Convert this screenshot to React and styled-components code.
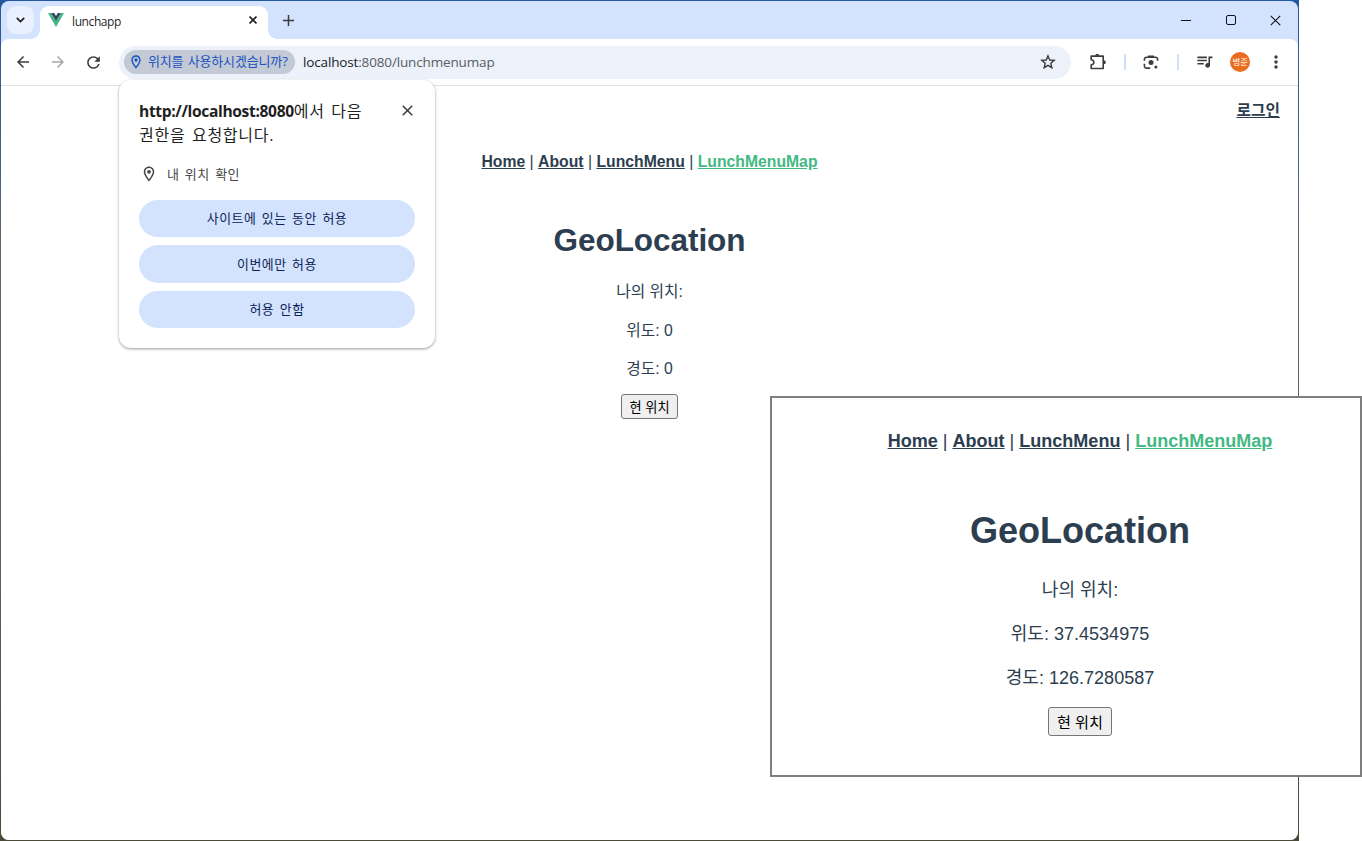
import React, { useState } from "react";
import styled, { createGlobalStyle } from "styled-components";
import {
    MdArrowBack,
    MdArrowForward,
    MdMoreVert,
    MdOutlineLocationOn,
    MdQueueMusic,
    MdRefresh,
} from "react-icons/md";

const GlobalStyle = createGlobalStyle`
    * {
        box-sizing: border-box;
    }

    body {
        margin: 0;
        background: #fff;
        overflow: hidden;
    }
`;

const uiFont = `"Open Sans", "Noto Sans CJK KR", sans-serif`;
const pageFont = `"Liberation Sans", "Noto Sans CJK KR", sans-serif`;

const Screen = styled.div`
    position: relative;
    width: 1362px;
    height: 841px;
`;

const Desktop = styled.div`
    display: flex;
    width: 1299px;
    height: 841px;
    padding: 1px;
    background: linear-gradient(#2458a0, #5b6670 30%, #5d6058 70%, #4a4a38);
`;

const Browser = styled.div`
    display: flex;
    flex-direction: column;
    flex: 1;
    background: #d3e2fd;
    border-radius: 8px;
    overflow: hidden;
    font-family: ${uiFont};
`;

const TabStrip = styled.div`
    display: flex;
    align-items: flex-start;
    height: 38px;
    padding-left: 6px;
    color: #1f1f1f;
`;

const TabSearch = styled.button`
    display: flex;
    align-items: center;
    justify-content: center;
    width: 27px;
    height: 28px;
    margin-top: 5px;
    padding: 0;
    border: none;
    border-radius: 9px;
    background: #e9f1fe;
`;

const Tab = styled.div`
    position: relative;
    display: flex;
    align-items: center;
    width: 228px;
    height: 33px;
    margin: 5px 0 0 6px;
    padding: 0 11px 5px 8px;
    border-radius: 9px 9px 0 0;
    background: #fff;

    &::before,
    &::after {
        content: "";
        position: absolute;
        bottom: 0;
        width: 9px;
        height: 9px;
    }

    &::before {
        left: -9px;
        background: radial-gradient(circle at 0 0, transparent 8.5px, #fff 9px);
    }

    &::after {
        right: -9px;
        background: radial-gradient(circle at 100% 0, transparent 8.5px, #fff 9px);
    }
`;

const TabTitle = styled.span`
    flex: 1;
    margin: 4px 0 0 8px;
    font-size: 12px;
    letter-spacing: -0.4px;
    line-height: 16px;
`;

const IconButton = styled.button`
    display: flex;
    align-items: center;
    justify-content: center;
    width: ${(props) => props.$width || 20}px;
    height: ${(props) => props.$height || 20}px;
    padding: 0;
    border: none;
    background: none;
    color: ${(props) => props.$color || "#3c3c3c"};
`;

const NewTab = styled(IconButton)`
    margin: 9px 0 0 10px;
`;

const WindowButtons = styled.div`
    display: flex;
    margin-left: auto;
`;

const Toolbar = styled.div`
    display: flex;
    align-items: center;
    height: 47px;
    padding: 0 12px 0 12px;
    background: #fff;
    border-bottom: 1px solid #dfe1e4;
    border-radius: 8px 8px 0 0;
`;

const NavButtons = styled.div`
    display: flex;
    gap: 15px;
    margin-right: 16px;
`;

const AddressBar = styled.div`
    display: flex;
    align-items: center;
    width: 952px;
    height: 33px;
    padding: 0 13px 0 5px;
    border-radius: 17px;
    background: #ecf1fa;
`;

const PermissionChip = styled.div`
    display: flex;
    align-items: center;
    width: 171px;
    height: 24px;
    padding-left: 4px;
    gap: 4px;
    border-radius: 12px;
    background: #c3c9d5;
    color: #1c54c0;
    font-size: 13px;
    line-height: 20px;
    white-space: nowrap;
`;

const ChipText = styled.span`
    margin-bottom: 2px;
    letter-spacing: -0.15px;
    word-spacing: 1px;
`;

const Url = styled.div`
    flex: 1;
    margin-left: 8px;
    color: #5a5d62;
    font-size: 13.5px;
    letter-spacing: -0.15px;
`;

const Host = styled.span`
    color: #202124;
`;

const Actions = styled.div`
    display: flex;
    align-items: center;
    justify-content: space-between;
    flex: 1;
    margin-left: 17px;
`;

const Divider = styled.span`
    width: 2px;
    height: 16px;
    background: #d0e0fc;
`;

const Avatar = styled.div`
    width: 20px;
    height: 20px;
    border-radius: 50%;
    background: #ea6d20;
    color: #fff;
    font-size: 8.5px;
    line-height: 19px;
    text-align: center;
`;

const Page = styled.div`
    flex: 1;
    background: #fff;
    color: #2c3e50;
    font-family: ${pageFont};
`;

const LoginRow = styled.div`
    display: flex;
    justify-content: flex-end;
    height: 48px;
    padding: 13px 18px 0 0;
    font-size: 15.8px;
    line-height: 24px;
`;

const Link = styled.a`
    color: ${(props) => (props.$active ? "#42b983" : "#2c3e50")};
    font-weight: bold;
    text-decoration: underline;
`;

const GeoSection = styled.section`
    display: flex;
    flex-direction: column;
    align-items: center;
    color: #2c3e50;
    font-family: ${pageFont};
    font-size: ${(props) => props.$size}px;
    padding-top: ${(props) => props.$top}px;
`;

const NavLine = styled.nav`
    line-height: 1.2em;
    white-space: nowrap;
`;

const Title = styled.h1`
    margin: 1.59em 0 0.7em;
    font-size: 2em;
    letter-spacing: -0.05px;
    line-height: 1.15em;
`;

const Line = styled.p`
    margin: 0 0 0.95em;
    line-height: 1.5em;
`;

const PositionButton = styled.button`
    width: 3.56em;
    height: 1.62em;
    margin-top: -0.13em;
    padding: 0;
    border: 1px solid #767676;
    border-radius: 3px;
    background: #efefef;
    color: #000;
    font-family: inherit;
    font-size: 1em;
    line-height: 1;
`;

const ButtonLabel = styled.span`
    font-size: 0.84em;
`;

const Popup = styled.div`
    position: absolute;
    left: 119px;
    top: 80px;
    width: 316px;
    height: 268px;
    padding: 19px 20px;
    border-radius: 12px;
    background: #fff;
    box-shadow: 0 1px 3px rgba(0, 0, 0, 0.4);
    color: #1f1f1f;
    font-family: ${uiFont};
`;

const PopupHeader = styled.div`
    display: flex;
    align-items: flex-start;
    justify-content: space-between;
`;

const PopupTitle = styled.div`
    font-size: 16px;
    letter-spacing: 0.75px;
    line-height: 24px;
    white-space: nowrap;
    word-spacing: 1.6px;
`;

const Origin = styled.b`
    font-size: 15.6px;
    font-weight: 700;
    letter-spacing: -0.35px;
`;

const Permission = styled.div`
    display: flex;
    align-items: center;
    gap: 9px;
    height: 24px;
    margin: 15px 0 14px;
    padding-left: 1px;
    color: #474747;
    font-size: 13px;
    letter-spacing: 0.5px;
    word-spacing: 1.5px;
`;

const PermissionText = styled.span`
    margin-bottom: 2px;
`;

const Choices = styled.div`
    display: flex;
    flex-direction: column;
    gap: 8px;
`;

const Choice = styled.button`
    height: 37.4px;
    padding: 0 0 2px;
    border: none;
    border-radius: 19px;
    background: #d3e2fd;
    color: #0b2456;
    font-family: inherit;
    font-size: 12.9px;
    letter-spacing: 0.6px;
    word-spacing: 1.4px;
`;

const ResultPanel = styled.div`
    position: absolute;
    left: 770px;
    top: 396px;
    width: 592px;
    height: 381px;
    padding-left: 28px;
    border: 2px solid #7f7f7f;
    background: #fff;
`;

const VueLogo = () => (
    <svg width="16" height="14" viewBox="0 0 16 14">
        <path d="M0 0h3.2L8 8.3 12.8 0H16L8 13.9z" fill="#41b883" />
        <path d="M3.2 0h3L8 3.1 9.8 0h3L8 8.3z" fill="#34495e" />
    </svg>
);

const CloseIcon = ({ size, stroke = 1.4 }) => (
    <svg width={size} height={size} viewBox="0 0 10 10" fill="none" stroke="currentColor" strokeWidth={stroke}>
        <path d="M.7.7l8.6 8.6M9.3.7L.7 9.3" />
    </svg>
);

const StarIcon = () => (
    <svg width="16" height="16" viewBox="0 0 16 16" fill="none" stroke="currentColor" strokeWidth="1.4">
        <path d="M8 1.9l1.75 4.1 4.45.4-3.37 2.93 1 4.35L8 11.35l-3.83 2.33 1-4.35L1.8 6.4l4.45-.4z" />
    </svg>
);

const ExtensionIcon = () => (
    <svg width="18" height="18" viewBox="0 0 18 18">
        <path
            d="M2.2 3.1h12v12.4h-12v-3.6c3.6-.4 3.6-4.7 0-5.1z"
            fill="none"
            stroke="currentColor"
            strokeWidth="1.6"
            strokeLinejoin="round"
        />
        <path d="M6.2 2.8a2 2 0 0 1 4 0zM14.8 7.2a2 2 0 0 1 0 4z" fill="currentColor" />
    </svg>
);

const LensIcon = () => (
    <svg width="16" height="16" viewBox="0 0 16 16" fill="none" stroke="currentColor" strokeWidth="1.6">
        <path d="M1.4 6.8V5.4a2.2 2.2 0 0 1 2.2-2.2h8.8a2.2 2.2 0 0 1 2.2 2.2v1.4" />
        <path d="M5 2.2h6" />
        <path d="M1.4 9.7v2.2a2.2 2.2 0 0 0 2.2 2.2h3.6" />
        <circle cx="8" cy="8.6" r="2.5" fill="currentColor" stroke="none" />
        <circle cx="12.9" cy="12.9" r="1.5" fill="currentColor" stroke="none" />
    </svg>
);

const GeoLocation = ({ size, top, latitude, longitude }) => (
    <GeoSection $size={size} $top={top}>
        <NavLine>
            <Link>Home</Link> | <Link>About</Link> | <Link>LunchMenu</Link> |{" "}
            <Link $active>LunchMenuMap</Link>
        </NavLine>
        <Title>GeoLocation</Title>
        <Line>나의 위치:</Line>
        <Line>위도: {latitude}</Line>
        <Line>경도: {longitude}</Line>
        <PositionButton>
            <ButtonLabel>현 위치</ButtonLabel>
        </PositionButton>
    </GeoSection>
);

const choices = ["사이트에 있는 동안 허용", "이번에만 허용", "허용 안함"];

const App = () => {
    const [showPopup, setShowPopup] = useState(true);

    return (
        <Screen>
            <GlobalStyle />
            <Desktop>
                <Browser>
                    <TabStrip>
                        <TabSearch>
                            <svg width="9" height="6" viewBox="0 0 9 6" fill="none" stroke="#1f1f1f" strokeWidth="1.8">
                                <path d="M.8.9l3.7 3.7L8.2.9" />
                            </svg>
                        </TabSearch>
                        <Tab>
                            <VueLogo />
                            <TabTitle>lunchapp</TabTitle>
                            <CloseIcon size={8} stroke={2} />
                        </Tab>
                        <NewTab>
                            <svg width="11" height="11" viewBox="0 0 11 11" stroke="currentColor" strokeWidth="1.5">
                                <path d="M5.5 0v11M0 5.5h11" />
                            </svg>
                        </NewTab>
                        <WindowButtons>
                            <IconButton $width={45} $height={38} $color="#111">
                                <svg width="10" height="10" viewBox="0 0 10 10" stroke="currentColor">
                                    <path d="M0 5.5h10" />
                                </svg>
                            </IconButton>
                            <IconButton $width={45} $height={38} $color="#111">
                                <svg width="10" height="10" viewBox="0 0 10 10" fill="none" stroke="currentColor">
                                    <rect x=".5" y=".5" width="9" height="9" rx="1.5" />
                                </svg>
                            </IconButton>
                            <IconButton $width={45} $height={38} $color="#111">
                                <CloseIcon size={11} stroke={1} />
                            </IconButton>
                        </WindowButtons>
                    </TabStrip>

                    <Toolbar>
                        <NavButtons>
                            <IconButton>
                                <MdArrowBack size={18} />
                            </IconButton>
                            <IconButton $color="#a6a6a6">
                                <MdArrowForward size={18} />
                            </IconButton>
                            <IconButton>
                                <MdRefresh size={19} />
                            </IconButton>
                        </NavButtons>
                        <AddressBar>
                            <PermissionChip>
                                <MdOutlineLocationOn size={16} />
                                <ChipText>위치를 사용하시겠습니까?</ChipText>
                            </PermissionChip>
                            <Url>
                                <Host>localhost</Host>:8080/lunchmenumap
                            </Url>
                            <IconButton>
                                <StarIcon />
                            </IconButton>
                        </AddressBar>
                        <Actions>
                            <IconButton>
                                <ExtensionIcon />
                            </IconButton>
                            <Divider />
                            <IconButton>
                                <LensIcon />
                            </IconButton>
                            <Divider />
                            <IconButton $height={22}>
                                <MdQueueMusic size={19} viewBox="0 1.5 24 24" />
                            </IconButton>
                            <Avatar>병준</Avatar>
                            <IconButton>
                                <MdMoreVert size={20} />
                            </IconButton>
                        </Actions>
                    </Toolbar>

                    <Page>
                        <LoginRow>
                            <Link>로그인</Link>
                        </LoginRow>
                        <GeoLocation size={15.75} top={19} latitude="0" longitude="0" />
                    </Page>
                </Browser>
            </Desktop>

            {showPopup && (
                <Popup>
                    <PopupHeader>
                        <PopupTitle>
                            <Origin>http://localhost:8080</Origin>에서 다음
                            <br />
                            권한을 요청합니다.
                        </PopupTitle>
                        <IconButton $width={16} $height={22} onClick={() => setShowPopup(false)}>
                            <CloseIcon size={11} />
                        </IconButton>
                    </PopupHeader>
                    <Permission>
                        <MdOutlineLocationOn size={18} />
                        <PermissionText>내 위치 확인</PermissionText>
                    </Permission>
                    <Choices>
                        {choices.map((choice) => (
                            <Choice key={choice} onClick={() => setShowPopup(false)}>
                                {choice}
                            </Choice>
                        ))}
                    </Choices>
                </Popup>
            )}

            <ResultPanel>
                <GeoLocation size={18.05} top={33} latitude="37.4534975" longitude="126.7280587" />
            </ResultPanel>
        </Screen>
    );
};

export default App;
